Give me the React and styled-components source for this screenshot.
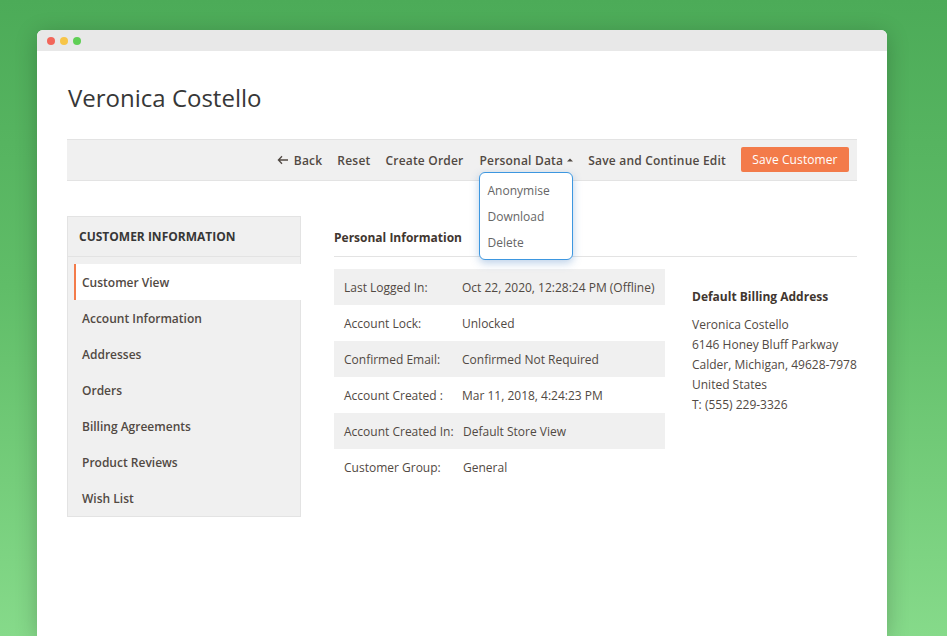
import React from "react";
import styled, { createGlobalStyle } from "styled-components";

const GlobalStyle = createGlobalStyle`
  html, body {
    margin: 0;
    padding: 0;
    height: 100%;
  }
  body {
    font-family: "Open Sans", "Noto Sans", sans-serif;
    color: #41362f;
    overflow: hidden;
  }
`;

const Page = styled.div`
  box-sizing: border-box;
  height: 636px;
  overflow: hidden;
  padding: 30px 60px 0 37px;
  background: linear-gradient(180deg, #4cab58 0%, #60bd68 45%, #86da8a 100%);
`;

const BrowserWindow = styled.div`
  height: 606px;
  border-radius: 6px 6px 0 0;
  background: #fff;
  box-shadow: 0 4px 22px rgba(0, 0, 0, 0.22);
`;

const TitleBar = styled.div`
  display: flex;
  align-items: center;
  gap: 5px;
  height: 21px;
  padding-left: 10px;
  border-radius: 6px 6px 0 0;
  background: #e8e8e8;
`;

const Dot = styled.span`
  width: 8px;
  height: 8px;
  border-radius: 50%;
  background: ${(props) => props.color};
`;

const Content = styled.div`
  padding: 29px 30px 0;
`;

const Title = styled.h1`
  margin: 0 0 23px 1px;
  font-size: 24px;
  line-height: 36px;
  font-weight: 400;
  color: #373737;
`;

const Toolbar = styled.div`
  box-sizing: border-box;
  display: flex;
  justify-content: flex-end;
  align-items: center;
  gap: 15px;
  height: 42px;
  padding-right: 8px;
  background: #f0f0f0;
  border-top: 1px solid #e3e3e3;
  border-bottom: 1px solid #e3e3e3;
`;

const ToolLink = styled.span`
  position: relative;
  display: flex;
  align-items: center;
  margin-right: ${(props) => props.$trail || 0}px;
  font-size: 12px;
  font-weight: 600;
  letter-spacing: 0.2px;
  color: #514943;
  white-space: nowrap;
`;

const SaveButton = styled.button`
  height: 25px;
  margin: -1px 0 0 0;
  padding: 0 10px;
  width: 108px;
  border: none;
  border-radius: 2px;
  background: #f37b4a;
  color: #fff;
  font-family: inherit;
  font-size: 12px;
  font-weight: 500;
  letter-spacing: 0.1px;
  white-space: nowrap;
`;

const Dropdown = styled.div`
  position: absolute;
  top: 20px;
  left: 0;
  box-sizing: border-box;
  width: 94px;
  height: 88px;
  padding: 5px 0 0 7px;
  background: #fff;
  border: 1px solid #3d97e0;
  border-radius: 6px;
  box-shadow: 0 3px 8px rgba(60, 120, 190, 0.35);
  z-index: 2;
`;

const DropdownItem = styled.div`
  height: 26px;
  line-height: 26px;
  font-size: 12px;
  font-weight: 400;
  letter-spacing: 0;
  color: #666;
`;

const Columns = styled.div`
  display: flex;
  margin-top: 35px;
`;

const Sidebar = styled.nav`
  box-sizing: border-box;
  flex: 0 0 234px;
  height: 301px;
  background: #f0f0f0;
  border: 1px solid #e3e3e3;
`;

const SidebarTitle = styled.div`
  box-sizing: border-box;
  height: 40px;
  padding-left: 11px;
  line-height: 39px;
  font-size: 12px;
  font-weight: 700;
  color: #373737;
  border-bottom: 1px solid #e3e3e3;
`;

const SidebarList = styled.div`
  padding-top: 7px;
`;

const SidebarItem = styled.div`
  box-sizing: border-box;
  height: 36px;
  margin: 0 -1px 0 6px;
  padding-left: 8px;
  line-height: 37px;
  font-size: 12px;
  font-weight: 600;
  color: #514943;
  background: ${(props) => (props.$active ? "#fff" : "transparent")};
  box-shadow: ${(props) => (props.$active ? "inset 2px 0 0 #f37b4a" : "none")};
`;

const Main = styled.div`
  flex: 1;
  margin-left: 33px;
`;

const SectionTitle = styled.h2`
  box-sizing: border-box;
  height: 41px;
  margin: 0 0 12px;
  line-height: 43px;
  font-size: 12px;
  font-weight: 700;
  color: #41362f;
  border-bottom: 1px solid #e3e3e3;
`;

const Details = styled.div`
  display: flex;
`;

const InfoTable = styled.div`
  flex: 0 0 331px;
`;

const InfoRow = styled.div`
  display: flex;
  height: 36px;
  align-items: center;
  padding-left: 10px;
  font-size: 12px;
  color: #514943;
  background: ${(props) => (props.$shaded ? "#f0f0f0" : "transparent")};
`;

const InfoLabel = styled.span`
  flex: 0 0 ${(props) => props.$width || 118}px;
`;

const InfoValue = styled.span`
  white-space: nowrap;
`;

const Billing = styled.div`
  margin: 19px 0 0 27px;
`;

const BillingTitle = styled.div`
  margin-bottom: 10px;
  font-size: 12px;
  line-height: 17px;
  font-weight: 700;
  color: #41362f;
`;

const BillingLine = styled.div`
  font-size: 12px;
  line-height: 20px;
  color: #514943;
  white-space: nowrap;
`;

const Arrow = () => (
  <svg width="12" height="10" viewBox="0 0 12 10" style={{ marginRight: 5 }}>
    <path d="M5 1.2 1.4 5 5 8.8M1.6 5H11" fill="none" stroke="#514943" strokeWidth="1.3" />
  </svg>
);

const Caret = () => (
  <svg width="6" height="4" viewBox="0 0 6 4" style={{ marginLeft: 4 }}>
    <path d="M0 3.4 3 .6l3 2.8z" fill="#514943" />
  </svg>
);

const sidebarItems = [
  "Customer View",
  "Account Information",
  "Addresses",
  "Orders",
  "Billing Agreements",
  "Product Reviews",
  "Wish List",
];

const infoRows = [
  ["Last Logged In:", "Oct 22, 2020, 12:28:24 PM (Offline)"],
  ["Account Lock:", "Unlocked"],
  ["Confirmed Email:", "Confirmed Not Required"],
  ["Account Created :", "Mar 11, 2018, 4:24:23 PM"],
  ["Account Created In:", "Default Store View", 119],
  ["Customer Group:", "General", 119],
];

const billingLines = [
  "Veronica Costello",
  "6146 Honey Bluff Parkway",
  "Calder, Michigan, 49628-7978",
  "United States",
  "T: (555) 229-3326",
];

export default function App() {
  return (
    <Page>
      <GlobalStyle />
      <BrowserWindow>
        <TitleBar>
          <Dot color="#f2665a" />
          <Dot color="#f7c548" />
          <Dot color="#5fcf55" />
        </TitleBar>
        <Content>
          <Title>Veronica Costello</Title>
          <Toolbar>
            <ToolLink>
              <Arrow />
              Back
            </ToolLink>
            <ToolLink>Reset</ToolLink>
            <ToolLink $trail={1}>Create Order</ToolLink>
            <ToolLink>
              Personal Data
              <Caret />
              <Dropdown>
                <DropdownItem>Anonymise</DropdownItem>
                <DropdownItem>Download</DropdownItem>
                <DropdownItem>Delete</DropdownItem>
              </Dropdown>
            </ToolLink>
            <ToolLink>Save and Continue Edit</ToolLink>
            <SaveButton>Save Customer</SaveButton>
          </Toolbar>
          <Columns>
            <Sidebar>
              <SidebarTitle>CUSTOMER INFORMATION</SidebarTitle>
              <SidebarList>
                {sidebarItems.map((item, i) => (
                  <SidebarItem key={item} $active={i === 0}>
                    {item}
                  </SidebarItem>
                ))}
              </SidebarList>
            </Sidebar>
            <Main>
              <SectionTitle>Personal Information</SectionTitle>
              <Details>
                <InfoTable>
                  {infoRows.map(([label, value, width], i) => (
                    <InfoRow key={label} $shaded={i % 2 === 0}>
                      <InfoLabel $width={width}>{label}</InfoLabel>
                      <InfoValue>{value}</InfoValue>
                    </InfoRow>
                  ))}
                </InfoTable>
                <Billing>
                  <BillingTitle>Default Billing Address</BillingTitle>
                  {billingLines.map((line) => (
                    <BillingLine key={line}>{line}</BillingLine>
                  ))}
                </Billing>
              </Details>
            </Main>
          </Columns>
        </Content>
      </BrowserWindow>
    </Page>
  );
}
